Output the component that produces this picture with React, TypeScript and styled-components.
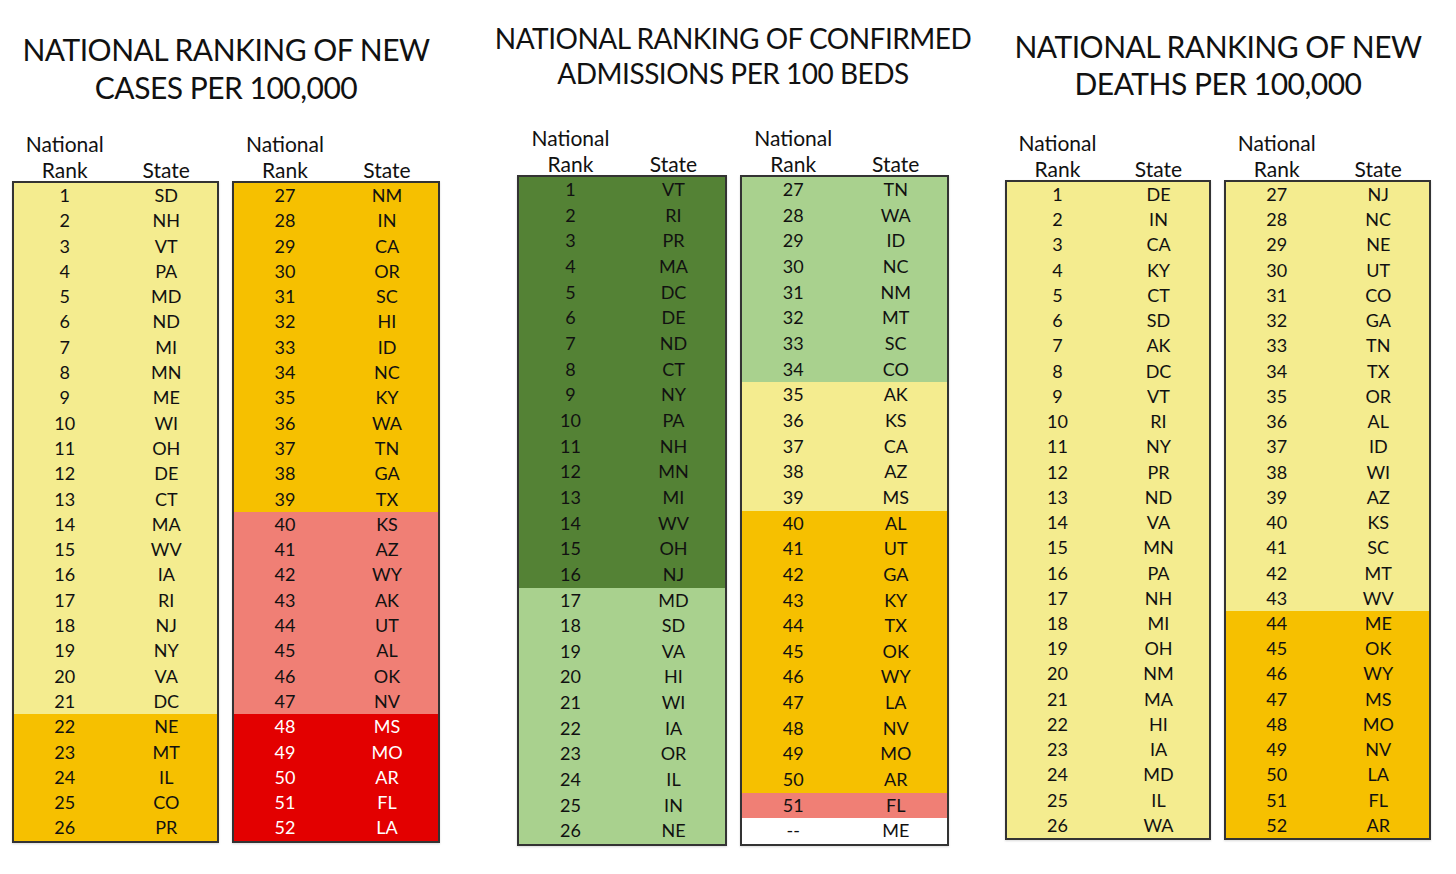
import React from "react";
import styled, {createGlobalStyle} from "styled-components";

const GlobalStyle = createGlobalStyle`
  html, body {
    margin: 0;
    padding: 0;
    background: #fff;
  }
  body {
    font-family: Lato, "Noto Sans", sans-serif;
    color: #111;
  }
`

type Tone = 'yellow' | 'orange' | 'salmon' | 'red' | 'dark' | 'green' | 'blank'

const toneBg: Record<Tone, string> = {
  yellow: '#f4ec8f',
  orange: '#f6c000',
  salmon: '#f07f75',
  red: '#e30000',
  dark: '#548235',
  green: '#a9d18e',
  blank: '#ffffff',
}

const Page = styled.div`
  width: 1456px;
  height: 874px;
  display: flex;
  overflow: hidden;
`

const Panel = styled.section<{ $width: number; $left: number; $top: number }>`
  width: ${p => p.$width}px;
  padding-left: ${p => p.$left}px;
  padding-top: ${p => p.$top}px;
  box-sizing: border-box;
  display: flex;
  flex-direction: column;
`

const Content = styled.div<{ $width: number }>`
  width: ${p => p.$width}px;
  display: flex;
  flex-direction: column;
  align-items: center;
`

const Title = styled.h1<{ $size: number; $line: number; $gap: number }>`
  margin: 0 0 ${p => p.$gap}px;
  font-weight: 400;
  font-size: ${p => p.$size}px;
  line-height: ${p => p.$line}px;
  letter-spacing: -0.5px;
  text-align: center;
  white-space: nowrap;
  color: #111;
`

const Tables = styled.div`
  display: flex;
  gap: 13px;
`

const Column = styled.div<{ $width: number }>`
  width: ${p => p.$width}px;
  display: flex;
  flex-direction: column;
`

const Head = styled.div`
  display: grid;
  grid-template-columns: 1fr 1fr;
  font-size: 21px;
  line-height: 26px;
  margin-bottom: -2px;
  padding: 0 2px;

  > span {
    text-align: center;
  }
`

const Stack = styled.span`
  display: flex;
  flex-direction: column;
  align-items: center;
`

const StateHead = styled.span`
  align-self: end;
`

const Box = styled.div`
  border: 2px solid #333;
  box-shadow: 0 1px 2px rgba(0, 0, 0, 0.15);
`

const Row = styled.div<{ $tone: Tone; $h: number }>`
  display: grid;
  grid-template-columns: 1fr 1fr;
  height: ${p => p.$h}px;
  line-height: ${p => p.$h}px;
  font-size: 18px;
  background: ${p => toneBg[p.$tone]};
  color: ${p => (p.$tone === 'red' ? '#fff' : '#111')};

  > span {
    text-align: center;
  }
`

type Entry = [string, string, Tone]

const build = (start: number, states: string, tones: [number, Tone][]): Entry[] => {
  const list = states.split(' ')
  const out: Entry[] = []
  let ti = 0
  let left = tones[0][0]
  list.forEach((st, i) => {
    while (left === 0) {
      ti++
      left = tones[ti][0]
    }
    out.push([String(start + i), st, tones[ti][1]])
    left--
  })
  return out
}

interface PanelData {
  title: string[]
  width: number
  left: number
  top: number
  titleSize: number
  titleLine: number
  titleGap: number
  colWidths: [number, number]
  rowH: number
  tables: [Entry[], Entry[]]
}

const panels: PanelData[] = [
  {
    title: ['NATIONAL RANKING OF NEW', 'CASES PER 100,000'],
    width: 480, left: 12, top: 30,
    titleSize: 30, titleLine: 38, titleGap: 25,
    colWidths: [207, 208], rowH: 25.3,
    tables: [
      build(1, 'SD NH VT PA MD ND MI MN ME WI OH DE CT MA WV IA RI NJ NY VA DC NE MT IL CO PR',
        [[21, 'yellow'], [5, 'orange']]),
      build(27, 'NM IN CA OR SC HI ID NC KY WA TN GA TX KS AZ WY AK UT AL OK NV MS MO AR FL LA',
        [[13, 'orange'], [8, 'salmon'], [5, 'red']]),
    ],
  },
  {
    title: ['NATIONAL RANKING OF CONFIRMED', 'ADMISSIONS PER 100 BEDS'],
    width: 496, left: 37, top: 21,
    titleSize: 28, titleLine: 35, titleGap: 34,
    colWidths: [210, 209], rowH: 25.66,
    tables: [
      build(1, 'VT RI PR MA DC DE ND CT NY PA NH MN MI WV OH NJ MD SD VA HI WI IA OR IL IN NE',
        [[16, 'dark'], [10, 'green']]),
      [
        ...build(27, 'TN WA ID NC NM MT SC CO AK KS CA AZ MS AL UT GA KY TX OK WY LA NV MO AR FL',
          [[8, 'green'], [5, 'yellow'], [11, 'orange'], [1, 'salmon']]),
        ['--', 'ME', 'blank'],
      ],
    ],
  },
  {
    title: ['NATIONAL RANKING OF NEW', 'DEATHS PER 100,000'],
    width: 480, left: 29, top: 28,
    titleSize: 30, titleLine: 37, titleGap: 28,
    colWidths: [206, 207], rowH: 25.24,
    tables: [
      build(1, 'DE IN CA KY CT SD AK DC VT RI NY PR ND VA MN PA NH MI OH NM MA HI IA MD IL WA',
        [[26, 'yellow']]),
      build(27, 'NJ NC NE UT CO GA TN TX OR AL ID WI AZ KS SC MT WV ME OK WY MS MO NV LA FL AR',
        [[17, 'yellow'], [9, 'orange']]),
    ],
  },
]

const RankTable = ({rows, width, rowH}: { rows: Entry[], width: number, rowH: number }) => (
  <Column $width={width}>
    <Head>
      <Stack>
        <span>National</span>
        <span>Rank</span>
      </Stack>
      <StateHead>State</StateHead>
    </Head>
    <Box>
      {rows.map(([rank, st, tone]) => (
        <Row key={rank + st} $tone={tone} $h={rowH}>
          <span>{rank}</span>
          <span>{st}</span>
        </Row>
      ))}
    </Box>
  </Column>
)

const App = () => (
  <Page>
    <GlobalStyle/>
    {panels.map(p => (
      <Panel key={p.title[1]} $width={p.width} $left={p.left} $top={p.top}>
        <Content $width={p.colWidths[0] + p.colWidths[1] + 13}>
          <Title $size={p.titleSize} $line={p.titleLine} $gap={p.titleGap}>
            {p.title[0]}<br/>{p.title[1]}
          </Title>
          <Tables>
            <RankTable rows={p.tables[0]} width={p.colWidths[0]} rowH={p.rowH}/>
            <RankTable rows={p.tables[1]} width={p.colWidths[1]} rowH={p.rowH}/>
          </Tables>
        </Content>
      </Panel>
    ))}
  </Page>
)

export default App
